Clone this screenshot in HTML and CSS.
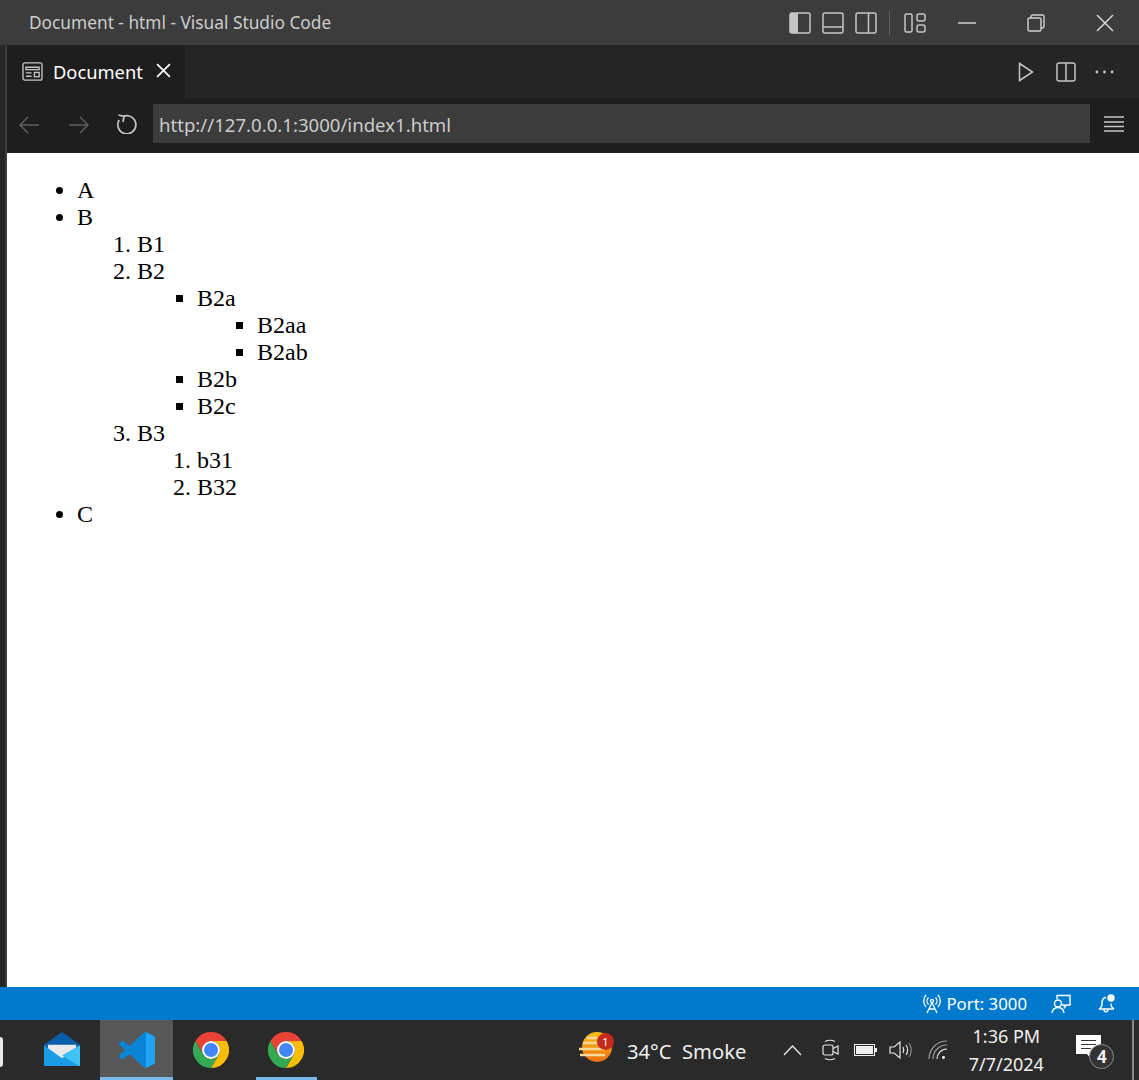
FILE: index.html
```html
<!DOCTYPE html>
<html lang="en">
<head>
  <meta charset="UTF-8">
  <title>Document - html - Visual Studio Code</title>
  <link rel="stylesheet" href="styles.css">
</head>
<body>

<div class="app">

  <div class="titlebar">
    <span class="title">Document - html - Visual Studio Code</span>
    <div class="layout-icons">
      <svg class="icon22" viewBox="0 0 22 22"><rect x="1" y="1" width="20" height="20" rx="2" fill="none" stroke="#c5c5c5" stroke-width="1.5"/><path d="M1 3a2 2 0 0 1 2-2h6v20H3a2 2 0 0 1-2-2z" fill="#c5c5c5"/></svg>
      <svg class="icon22" viewBox="0 0 22 22"><rect x="1" y="1" width="20" height="20" rx="2" fill="none" stroke="#c5c5c5" stroke-width="1.5"/><path d="M1 15h20" stroke="#c5c5c5" stroke-width="1.5"/></svg>
      <svg class="icon22" viewBox="0 0 22 22"><rect x="1" y="1" width="20" height="20" rx="2" fill="none" stroke="#c5c5c5" stroke-width="1.5"/><path d="M13.5 1v20" stroke="#c5c5c5" stroke-width="1.5"/></svg>
      <span class="separator"></span>
      <svg class="icon22" viewBox="0 0 22 22" fill="none" stroke="#c5c5c5" stroke-width="1.5"><rect x="1" y="2" width="7" height="18" rx="1.5"/><rect x="13" y="2" width="8" height="7" rx="2"/><rect x="13" y="13" width="8" height="7" rx="2"/></svg>
    </div>
    <div class="window-buttons">
      <svg class="win-min" viewBox="0 0 18 2"><path d="M0 1h18" stroke="#d0d0d0" stroke-width="1.5"/></svg>
      <svg class="win-restore" viewBox="0 0 18 18" fill="none" stroke="#d0d0d0" stroke-width="1.4"><rect x="1" y="4" width="13" height="13" rx="1.5"/><path d="M4 4V2.500A1.500 1.500 0 0 1 5.500 1h10A1.500 1.500 0 0 1 17 2.500v10a1.500 1.500 0 0 1-1.500 1.500H14"/></svg>
      <svg class="win-close" viewBox="0 0 18 18"><path d="M1 1l16 16M17 1L1 17" stroke="#d8d8d8" stroke-width="1.5"/></svg>
    </div>
  </div>

  <div class="workspace">
    <div class="activity-edge"></div>

    <div class="editor">
      <div class="tabbar">
        <div class="tab">
          <svg class="tab-icon" viewBox="0 0 22 20" fill="none" stroke="#c5c5c5" stroke-width="1.4"><rect x="1" y="1" width="20" height="18" rx="2"/><path d="M4 5.500h14v2.500H4zM4 11.500h6M4 15h6"/><rect x="13" y="11" width="5" height="4.500"/></svg>
          <span class="tab-label">Document</span>
          <svg class="tab-close" viewBox="0 0 14 14"><path d="M1 1l12 12M13 1L1 13" stroke="#fff" stroke-width="1.6"/></svg>
        </div>
        <div class="tab-actions">
          <svg class="act-play" viewBox="0 0 16 20"><path d="M1.500 1.500L14.500 10L1.500 18.500z" fill="none" stroke="#c5c5c5" stroke-width="1.500"/></svg>
          <svg class="act-split" viewBox="0 0 20 20" fill="none" stroke="#c5c5c5" stroke-width="1.500"><rect x="1" y="1" width="18" height="18" rx="2"/><path d="M10 1v18"/></svg>
          <svg class="act-more" viewBox="0 0 20 4" fill="#c5c5c5"><circle cx="2" cy="2" r="1.500"/><circle cx="10" cy="2" r="1.500"/><circle cx="18" cy="2" r="1.500"/></svg>
        </div>
      </div>

      <div class="toolbar">
        <svg class="nav-arrow" viewBox="0 0 20 18" fill="none" stroke="#5f5f5f" stroke-width="1.500"><path d="M20 9H1M9 1L1 9l8 8"/></svg>
        <svg class="nav-arrow nav-forward" viewBox="0 0 20 18" fill="none" stroke="#5f5f5f" stroke-width="1.500"><path d="M0 9h19M11 1l8 8-8 8"/></svg>
        <svg class="nav-reload" viewBox="0 0 20 20" fill="none" stroke="#c5c5c5" stroke-width="1.700"><path d="M6.500 2.400A9 9 0 1 1 2.200 6"/><path d="M1.500 1l5.500 1.400-1 5.600"/></svg>
        <div class="urlbox">http://127.0.0.1:3000/index1.html</div>
        <svg class="nav-menu" viewBox="0 0 20 16" stroke="#c5c5c5" stroke-width="1.500"><path d="M0 1h20M0 6h20M0 10.500h20M0 15h20"/></svg>
      </div>

      <div class="webview">
        <ul class="disc top-list">
          <li>A</li>
          <li>B
            <ol>
              <li>B1</li>
              <li>B2
                <ul class="square">
                  <li>B2a
                    <ul class="square">
                      <li>B2aa</li>
                      <li>B2ab</li>
                    </ul>
                  </li>
                  <li>B2b</li>
                  <li>B2c</li>
                </ul>
              </li>
              <li>B3
                <ol>
                  <li>b31</li>
                  <li>B32</li>
                </ol>
              </li>
            </ol>
          </li>
          <li>C</li>
        </ul>
      </div>
    </div>
  </div>

  <div class="statusbar">
    <svg class="st-port" viewBox="0 0 20 20" fill="none" stroke="#fff" stroke-width="1.300"><circle cx="10" cy="7" r="1.500"/><path d="M6.500 10.500a5 5 0 0 1 0-7M13.500 10.500a5 5 0 0 0 0-7M4 13a9 9 0 0 1 0-12M16 13a9 9 0 0 0 0-12M10 8.500L5 19M10 8.500L15 19M7 15h6"/></svg>
    <span class="port-label">Port: 3000</span>
    <svg class="st-feedback" viewBox="0 0 20 20" fill="none" stroke="#fff" stroke-width="1.400"><path d="M6 5V1.500h13V11h-3.500l-2 2.500V11H11"/><circle cx="7" cy="9.500" r="3.500"/><path d="M1 19c.500-3.500 2.500-5.500 6-5.500s5.500 2 6 5.500"/></svg>
    <svg class="st-bell" viewBox="0 0 20 20"><path d="M9 3.500C5.500 3.500 5 6.500 5 9.500c0 3-1 4.500-3 5.500h15c-2-1-3-2.500-3-5.500M7 15.500c0 3 4 3 4 0" fill="none" stroke="#fff" stroke-width="1.400"/><circle cx="14" cy="4" r="3.700" fill="#fff"/></svg>
  </div>

  <div class="taskbar">
    <div class="task-cut"></div>
    <div class="task-item task-mail">
      <svg class="task-icon" viewBox="0 0 37 37">
        <path d="M0 13L18.500 0L37 13V16H0z" fill="#0a5cad"/>
        <path d="M4 13h29v8l-14.500 6L4 21z" fill="#e9e9e9"/>
        <path d="M0 13.500L18.500 27L37 13.500V34a1 1 0 0 1-1 1H1a1 1 0 0 1-1-1z" fill="#1a9be6"/>
        <path d="M37 13.500V35H36L18.500 24z" fill="#3ec4f4"/>
      </svg>
    </div>
    <div class="task-item is-active">
      <svg class="task-icon" viewBox="0 0 100 100">
        <path d="M70.900 99.300C72.500 99.900 74.300 99.900 75.900 99.100L96.500 89.200C98.600 88.200 100 86 100 83.600V16.400C100 14 98.600 11.800 96.500 10.800L75.900 0.900C73.800 -0.100 71.300 0.100 69.500 1.400C69.300 1.600 69 1.800 68.800 2.100L29.400 38L12.200 25C10.600 23.800 8.400 23.900 6.900 25.200L1.400 30.300C-0.500 31.900 -0.500 34.800 1.400 36.400L16.200 50L1.400 63.600C-0.500 65.200 -0.500 68.100 1.400 69.700L6.900 74.800C8.400 76.100 10.600 76.200 12.200 75L29.400 62L68.800 97.900C69.400 98.500 70.100 99 70.900 99.300ZM75 27.300L45.100 50L75 72.700V27.300Z" fill="#0a84d6"/>
        <path d="M75 0.300L96.500 10.800C98.600 11.800 100 14 100 16.400V83.600C100 86 98.600 88.200 96.500 89.200L75 99.700z" fill="#1fa3f3"/>
      </svg>
    </div>
    <div class="task-item task-chrome">
      <svg class="task-icon" viewBox="0 0 36 36">
        <path d="M2.410 9A18 18 0 0 1 33.590 9H18A9 9 0 0 0 10.210 22.500z" fill="#ea4335"/>
        <path d="M33.590 9A18 18 0 0 1 18 36L25.790 22.500A9 9 0 0 0 18 9z" fill="#fbbc04"/>
        <path d="M18 36A18 18 0 0 1 2.410 9L10.210 22.500A9 9 0 0 0 25.790 22.500z" fill="#34a853"/>
        <circle cx="18" cy="18" r="9" fill="#fff"/>
        <circle cx="18" cy="18" r="7" fill="#4285f4"/>
      </svg>
    </div>
    <div class="task-item task-chrome has-window">
      <svg class="task-icon" viewBox="0 0 36 36">
        <path d="M2.410 9A18 18 0 0 1 33.590 9H18A9 9 0 0 0 10.210 22.500z" fill="#ea4335"/>
        <path d="M33.590 9A18 18 0 0 1 18 36L25.790 22.500A9 9 0 0 0 18 9z" fill="#fbbc04"/>
        <path d="M18 36A18 18 0 0 1 2.410 9L10.210 22.500A9 9 0 0 0 25.790 22.500z" fill="#34a853"/>
        <circle cx="18" cy="18" r="9" fill="#fff"/>
        <circle cx="18" cy="18" r="7" fill="#4285f4"/>
      </svg>
    </div>

    <div class="weather">
      <div class="weather-icon">
        <svg class="weather-svg" viewBox="0 0 34 32">
          <defs>
            <linearGradient id="sun" x1="0" y1="0" x2="0" y2="1">
              <stop offset="0" stop-color="#fcc21b"/>
              <stop offset="1" stop-color="#ec6f0c"/>
            </linearGradient>
          </defs>
          <circle cx="18" cy="16" r="15" fill="url(#sun)"/>
          <path d="M8 7h10M4 12h17M0 18h26M1 24h25" stroke="#f5d99a" stroke-width="2.400"/>
        </svg>
        <span class="weather-badge">1</span>
      </div>
      <span class="weather-text">34°C&nbsp; Smoke</span>
    </div>

    <div class="tray">
      <svg class="tray-chevron" viewBox="0 0 19 11" fill="none" stroke="#e6e6e6" stroke-width="1.400"><path d="M1 10l8.500-9L18 10"/></svg>
      <svg class="tray-meet" viewBox="0 0 17 22" fill="none" stroke="#e6e6e6" stroke-width="1.200"><rect x="1" y="6" width="10" height="10" rx="2"/><path d="M11 9.500l5-2.500v8l-5-2.500M3 2.500c3-1.500 7-1.500 10 0M3 19.500c3 1.500 7 1.500 10 0"/></svg>
      <svg class="tray-battery" viewBox="0 0 23 12"><rect x="0.500" y="0.500" width="20" height="11" fill="none" stroke="#f0f0f0" stroke-width="1"/><rect x="2" y="2" width="17" height="8" fill="#f0f0f0"/><rect x="21" y="4" width="2" height="4" fill="#f0f0f0"/></svg>
      <svg class="tray-volume" viewBox="0 0 23 18" fill="none" stroke="#e6e6e6" stroke-width="1.200"><path d="M1 6h4l6-5v16l-6-5H1z"/><path d="M14 6c1 2 1 4 0 6M17 4c2 3 2 7 0 10"/><path d="M20 2c3 4 3 10 0 14" stroke="#8a8a8a"/></svg>
      <svg class="tray-wifi" viewBox="0 0 20 20" fill="none" stroke="#bbb" stroke-width="1.200"><path d="M1 19C1 9 9 1 19 1M5 19C5 11 11 5 19 5" stroke="#999"/><path d="M9 19c0-5 4-10 10-10" stroke="#e6e6e6"/><circle cx="15.500" cy="17.500" r="1.400" fill="#fff" stroke="none"/></svg>
      <div class="clock">
        <span>1:36 PM</span>
        <span>7/7/2024</span>
      </div>
      <div class="notify">
        <svg class="notify-svg" viewBox="0 0 25 25"><path d="M0 0h25v19h-8l-2 5-4-5H0z" fill="#fff"/><path d="M5 5.500h15M5 9.500h15M5 13.500h10" stroke="#333" stroke-width="1.200"/></svg>
        <span class="notify-count">4</span>
      </div>
      <div class="show-desktop"></div>
    </div>
  </div>

</div>

</body>
</html>
```

FILE: styles.css
```css
html, body {
  margin: 0;
  padding: 0;
  background: #fff;
}
svg {
  display: block;
  flex: none;
}
.app {
  width: 1139px;
  height: 1080px;
  display: flex;
  flex-direction: column;
  overflow: hidden;
  font-family: 'Noto Sans', 'Open Sans', sans-serif;
}

/* title bar */
.titlebar {
  height: 45px;
  flex: none;
  background: #3c3c3c;
  display: flex;
  align-items: center;
  padding-left: 29px;
}
.title {
  font-size: 17.3px;
  color: #cccccc;
  width: 760px;
  white-space: nowrap;
}
.layout-icons {
  display: flex;
  align-items: center;
  gap: 11px;
  width: 169px;
}
.icon22 {
  width: 22px;
  height: 22px;
}
.separator {
  width: 1px;
  height: 24px;
  background: #5f5f5f;
  margin: 0 3px 0 1px;
}
.window-buttons {
  display: flex;
  align-items: center;
}
.win-min {
  width: 18px;
  height: 2px;
}
.win-restore {
  width: 18px;
  height: 18px;
  margin-left: 51px;
}
.win-close {
  width: 18px;
  height: 18px;
  margin-left: 51px;
}

/* editor area */
.workspace {
  flex: 1;
  display: flex;
  min-height: 0;
}
.activity-edge {
  width: 5px;
  background: #252526;
  border-right: 2px solid #3c3c3c;
}
.editor {
  flex: 1;
  display: flex;
  flex-direction: column;
  min-width: 0;
}
.tabbar {
  height: 53px;
  flex: none;
  background: #252526;
  display: flex;
  justify-content: space-between;
}
.tab {
  width: 178px;
  box-sizing: border-box;
  background: #1e1e1e;
  display: flex;
  align-items: center;
  padding-left: 15px;
}
.tab-icon {
  width: 21px;
  height: 19px;
}
.tab-label {
  font-size: 18.3px;
  color: #fff;
  margin-left: 10px;
}
.tab-close {
  width: 15px;
  height: 15px;
  margin-left: 13px;
  margin-top: -2px;
}
.tab-actions {
  display: flex;
  align-items: center;
  padding-right: 25px;
}
.act-play {
  width: 16px;
  height: 20px;
}
.act-split {
  width: 20px;
  height: 20px;
  margin-left: 22px;
}
.act-more {
  width: 19px;
  height: 4px;
  margin-left: 19px;
}
.toolbar {
  height: 55px;
  flex: none;
  background: #1e1e1e;
  display: flex;
  align-items: center;
  padding-left: 12px;
}
.nav-arrow {
  width: 20px;
  height: 18px;
  margin-top: -2px;
}
.nav-forward {
  margin-left: 30px;
}
.nav-reload {
  width: 20px;
  height: 20px;
  margin-left: 28px;
  margin-top: -3px;
}
.urlbox {
  width: 937px;
  height: 39px;
  box-sizing: border-box;
  margin-left: 16px;
  margin-top: -4px;
  padding-left: 6px;
  background: #3c3c3c;
  color: #cccccc;
  font-size: 18.6px;
  line-height: 41px;
  white-space: nowrap;
}
.nav-menu {
  width: 20px;
  height: 16px;
  margin-left: 14px;
  margin-top: -4px;
}

/* page content */
.webview {
  flex: 1;
  background: #fff;
  padding: 24px 0 0 10px;
  font-family: 'Liberation Serif', serif;
  font-size: 24px;
  color: #000;
}
ul, ol {
  margin: 0;
  padding-left: 60px;
}
.disc {
  list-style-type: disc;
}
.square {
  list-style-type: square;
}
ol {
  list-style-type: decimal;
}

/* status bar */
.statusbar {
  height: 33px;
  flex: none;
  background: #007acc;
  display: flex;
  align-items: center;
  justify-content: flex-end;
  padding-right: 22px;
  color: #fff;
}
.st-port {
  width: 20px;
  height: 20px;
}
.port-label {
  font-size: 16.8px;
  margin-left: 4px;
}
.st-feedback {
  width: 20px;
  height: 20px;
  margin-left: 24px;
}
.st-bell {
  width: 20px;
  height: 20px;
  margin-left: 26px;
}

/* windows taskbar */
.taskbar {
  height: 60px;
  flex: none;
  background: #2a2a2a;
  display: flex;
}
.task-cut {
  width: 25px;
  position: relative;
}
.task-cut::before {
  content: '';
  position: absolute;
  left: -8px;
  top: 17px;
  width: 11px;
  height: 30px;
  border-radius: 3px;
  background: #e8e8e8;
}
.task-item {
  width: 73px;
  box-sizing: border-box;
  display: flex;
  align-items: center;
  justify-content: center;
  position: relative;
}
.task-mail {
  width: 75px;
  padding-right: 2px;
}
.task-chrome {
  padding-left: 2px;
}
.task-icon {
  width: 36px;
  height: 36px;
}
.is-active {
  background: #575757;
  border-bottom: 3px solid #76b9ed;
  padding-top: 3px;
}
.has-window {
  margin-left: 2px;
}
.has-window::after {
  content: '';
  position: absolute;
  left: 8px;
  right: 4px;
  bottom: 0;
  height: 3px;
  background: #76b9ed;
}
.weather {
  display: flex;
  align-items: center;
  margin-left: 258px;
  color: #f0f0f0;
}
.weather-icon {
  width: 34px;
  height: 32px;
  position: relative;
  top: -3px;
}
.weather-svg {
  width: 34px;
  height: 32px;
}
.weather-badge {
  position: absolute;
  right: -1px;
  top: 2px;
  width: 17px;
  height: 17px;
  border-radius: 50%;
  background: #c42b1c;
  color: #fff;
  font-size: 11px;
  line-height: 17px;
  text-align: center;
}
.weather-text {
  font-size: 20.2px;
  margin-left: 14px;
  padding-top: 2px;
  white-space: nowrap;
}
.tray {
  display: flex;
  align-items: center;
  margin-left: 37px;
  color: #f0f0f0;
}
.tray-chevron {
  width: 19px;
  height: 11px;
}
.tray-meet {
  width: 17px;
  height: 22px;
  margin-left: 20px;
}
.tray-battery {
  width: 23px;
  height: 12px;
  margin-left: 15px;
}
.tray-volume {
  width: 23px;
  height: 18px;
  margin-left: 12px;
}
.tray-wifi {
  width: 20px;
  height: 20px;
  margin-left: 16px;
}
.clock {
  width: 90px;
  margin-left: 13px;
  display: flex;
  flex-direction: column;
  align-items: center;
  gap: 4px;
  font-size: 18px;
  line-height: 24px;
}
.notify {
  width: 38px;
  height: 38px;
  margin-left: 25px;
  position: relative;
}
.notify-svg {
  width: 25px;
  height: 25px;
  margin-top: 4px;
}
.notify-count {
  position: absolute;
  right: 0;
  bottom: 0;
  width: 23px;
  height: 23px;
  border-radius: 50%;
  border: 1px solid #8a8a8a;
  background: #333;
  color: #f0f0f0;
  font-size: 17px;
  font-weight: bold;
  line-height: 23px;
  text-align: center;
}
.show-desktop {
  width: 2px;
  height: 60px;
  background: #8a8a8a;
  margin-left: 18px;
}
```
